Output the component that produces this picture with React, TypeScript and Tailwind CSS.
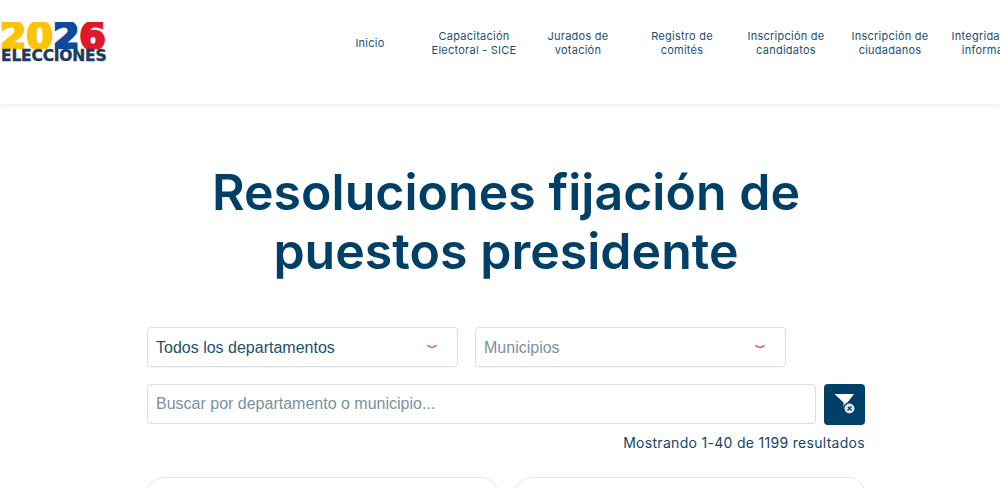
const navItems = [
  ["Inicio"],
  ["Capacitación", "Electoral - SICE"],
  ["Jurados de", "votación"],
  ["Registro de", "comités"],
  ["Inscripción de", "candidatos"],
  ["Inscripción de", "ciudadanos"],
  ["Integridad de la", "información"],
];

function Logo() {
  return (
    <div className="w-[107px] h-[42px] flex flex-col items-start overflow-hidden font-['DejaVu_Sans',sans-serif]">
      <div className="h-[27px] w-[107px] overflow-hidden flex text-[38px] leading-[29px] font-bold [-webkit-text-stroke:2.5px_currentColor]">
        <span className="text-[#fcc30b]">20</span>
        <span className="text-[#0b4a9e]">2</span>
        <span className="text-[#e0162b]">6</span>
      </div>
      <div className="ml-[1px] text-[15.5px] leading-[14px] font-bold text-[#1d3c5c] tracking-[-0.2px] [-webkit-text-stroke:0.4px_currentColor]">
        ELECCIONES
      </div>
    </div>
  );
}

function Chevron() {
  return (
    <svg width="12" height="6" viewBox="0 0 12 6" fill="none">
      <path d="M2 1.5C4 4 8 4 10 1.5" stroke="#d9513f" strokeWidth="1.3" strokeLinecap="round" />
    </svg>
  );
}

function SelectBox({ label, muted }: { label: string; muted?: boolean }) {
  return (
    <div className="w-[311px] h-[40px] pl-2 pr-[19px] flex items-center justify-between bg-white border border-[#dcdfe2] rounded-[4px] shadow-[0_1px_1px_rgba(0,0,0,0.04)]">
      <span className={`pt-[1px] text-[16px] font-['Liberation_Sans',sans-serif] ${muted ? "text-[#7b919f]" : "text-[#1d4f6e]"}`}>
        {label}
      </span>
      <Chevron />
    </div>
  );
}

function FilterOffIcon() {
  return (
    <svg width="24" height="24" viewBox="0 0 24 24">
      <path d="M1.5 1H21L14.5 9.5V17L10.5 14.5V9.5Z" fill="white" />
      <circle cx="16.5" cy="15.5" r="6.5" fill="#003f66" />
      <circle cx="16.5" cy="15.5" r="5" fill="#dfe6ea" />
      <path d="M14.5 17.5L18.5 13.5M15 14L18.5 17.5" stroke="#003f66" strokeWidth="1.3" />
    </svg>
  );
}

export default function App() {
  return (
    <div className="w-[1000px] h-[489px] overflow-hidden bg-white font-['Inter',sans-serif]">
      <header className="h-[104px] flex items-start shadow-[0_1px_6px_rgba(0,0,0,0.1)]">
        <div className="w-[318px] shrink-0 pt-[22px]">
          <Logo />
        </div>
        <nav className="flex pt-[29px] text-[#1a4f72] text-[11px] leading-[14px] tracking-[0.25px]">
          {navItems.map((lines) => (
            <a
              key={lines[0]}
              className={`w-[104px] shrink-0 flex flex-col items-center whitespace-nowrap ${lines.length === 1 ? "pt-[7px]" : ""}`}
            >
              {lines.map((l) => (
                <span key={l}>{l}</span>
              ))}
            </a>
          ))}
        </nav>
      </header>

      <main className="ml-[147px] w-[718px] flex flex-col">
        <h1 className="mt-[59px] text-center text-[#003f66] text-[50px] leading-[59px] font-semibold tracking-[0.03px]">
          Resoluciones fijación de
          <br />
          puestos presidente
        </h1>

        <div className="mt-[46px] flex gap-[17px]">
          <SelectBox label="Todos los departamentos" />
          <SelectBox label="Municipios" muted />
        </div>

        <div className="mt-[17px] flex items-start gap-[8px]">
          <input
            placeholder="Buscar por departamento o municipio..."
            className="w-[669px] h-[40px] px-2 bg-white border border-[#dcdfe2] rounded-[4px] text-[16px] outline-none placeholder:text-[#7b919f] font-['Liberation_Sans',sans-serif]"
          />
          <button className="w-[41px] h-[41px] flex items-center justify-center bg-[#003f66] rounded-[4px]">
            <FilterOffIcon />
          </button>
        </div>

        <p className="mt-[9px] text-right text-[14px] leading-[18px] text-[#12466a] tracking-[0.3px]">
          Mostrando 1-40 de 1199 resultados
        </p>

        <div className="mt-[25px] flex gap-[16px]">
          <div className="w-[351px] h-[100px] bg-white border border-[#e6e8ea] rounded-[16px]" />
          <div className="w-[351px] h-[100px] bg-white border border-[#e6e8ea] rounded-[16px]" />
        </div>
      </main>
    </div>
  );
}
